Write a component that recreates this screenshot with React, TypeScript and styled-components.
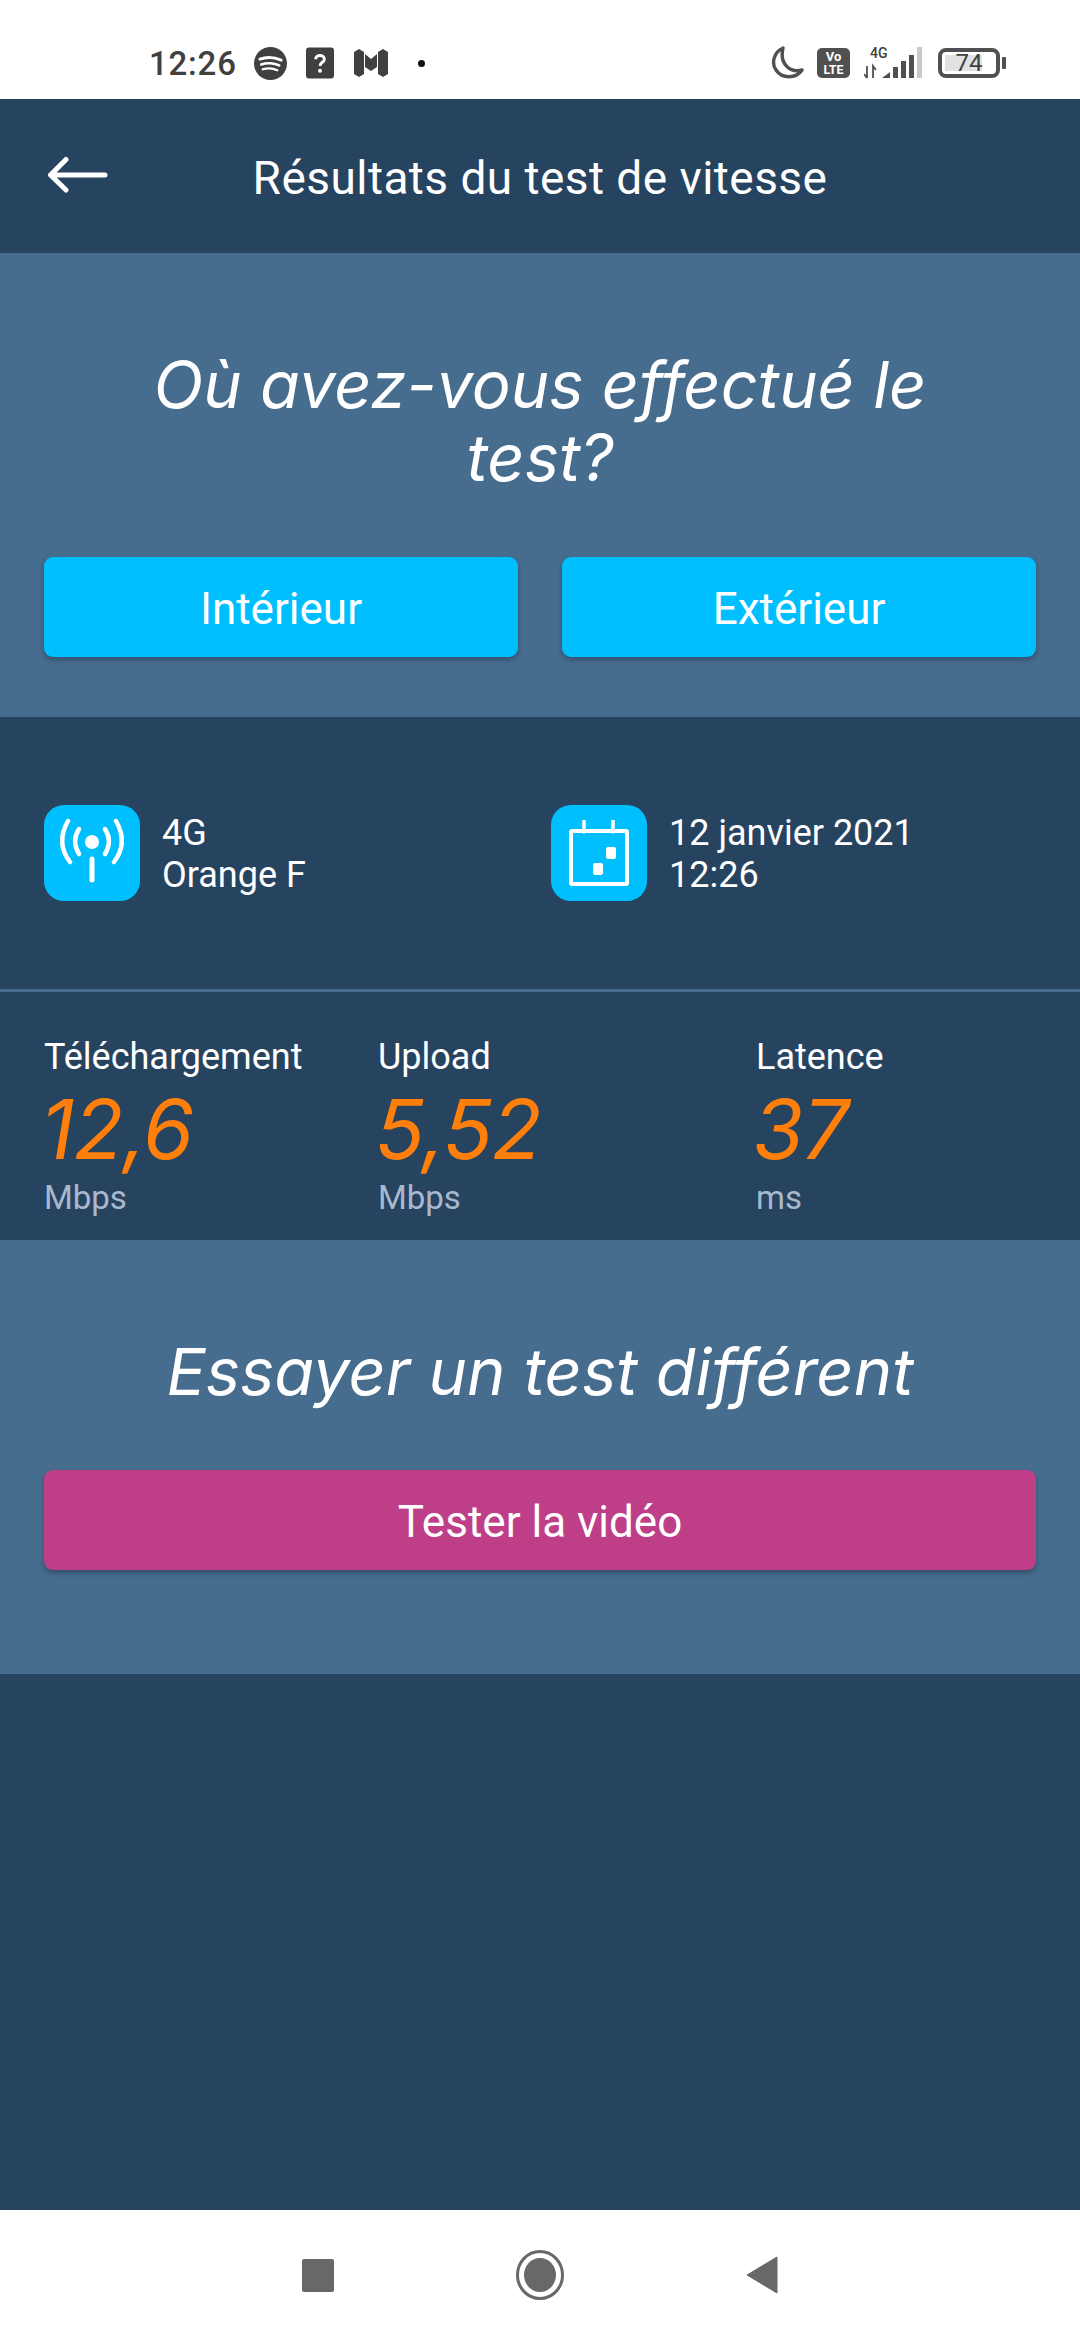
import React from 'react';
import styled, { createGlobalStyle } from 'styled-components';

const GlobalStyle = createGlobalStyle`
  html, body {
    margin: 0;
    padding: 0;
    background: #ffffff;
  }
  * {
    box-sizing: border-box;
  }
`;

const Screen = styled.div`
  width: 1080px;
  height: 2340px;
  display: flex;
  flex-direction: column;
  font-family: 'Roboto', sans-serif;
  color: #ffffff;
  background: #264360;
`;

const StatusBar = styled.div`
  height: 99px;
  flex: none;
  background: #ffffff;
  display: flex;
  align-items: center;
  justify-content: space-between;
  padding: 27px 80px 0 149px;
  color: #404040;
`;

const StatusGroup = styled.div`
  display: flex;
  align-items: center;
`;

const Clock = styled.span`
  font-size: 33px;
  font-weight: 500;
  letter-spacing: 0.8px;
  margin-right: 17px;
`;

const StatusGlyph = styled.svg<{ $gap: number }>`
  margin-right: ${(p) => p.$gap}px;
  flex: none;
`;

const Battery = styled.div`
  position: relative;
  width: 62px;
  height: 30px;
  border: 4px solid #505050;
  border-radius: 8px;
  display: flex;
  align-items: center;
  justify-content: center;
  font-size: 24px;
  color: #404040;
  margin-left: 15px;

  &::before {
    content: '';
    position: absolute;
    left: 3px;
    top: 3px;
    bottom: 3px;
    width: 68%;
    background: #e2e2e2;
  }

  &::after {
    content: '';
    position: absolute;
    right: -10px;
    top: 5px;
    width: 4px;
    height: 12px;
    border-radius: 1px;
    background: #505050;
  }
`;

const BatteryValue = styled.span`
  position: relative;
`;

const Header = styled.div`
  height: 154px;
  flex: none;
  background: #264360;
  display: grid;
  grid-template-columns: 1fr auto 1fr;
  align-items: center;
  padding: 0 48px;
`;

const HeaderTitle = styled.div`
  font-size: 46px;
  letter-spacing: 0.45px;
  padding-top: 3px;
`;

const Panel = styled.section<{ $height: number }>`
  height: ${(p) => p.$height}px;
  flex: none;
  background: #466c8e;
  padding: 95px 44px 0;
  display: flex;
  flex-direction: column;
`;

const Question = styled.h2`
  margin: 0;
  font-family: 'Inter', sans-serif;
  font-style: italic;
  font-weight: 400;
  font-size: 65px;
  line-height: 73px;
  text-align: center;
`;

const ButtonRow = styled.div`
  display: flex;
  gap: 44px;
  margin-top: 63px;
`;

const ActionButton = styled.button<{ $bg: string }>`
  flex: 1;
  height: 100px;
  padding: 3px 0 0;
  border: none;
  border-radius: 9px;
  background: ${(p) => p.$bg};
  color: #ffffff;
  font-family: 'Roboto', sans-serif;
  font-size: 44px;
  box-shadow: 0 3px 5px rgba(0, 0, 0, 0.25);
`;

const VideoButton = styled(ActionButton)`
  flex: none;
  margin-top: 62px;
`;

const InfoRow = styled.div`
  height: 275px;
  flex: none;
  display: grid;
  grid-template-columns: 507px 1fr;
  align-items: center;
  padding: 0 44px;
  border-bottom: 3px solid #466c8e;
`;

const InfoItem = styled.div`
  display: flex;
  align-items: center;
  gap: 22px;
`;

const InfoIcon = styled.div`
  width: 96px;
  height: 96px;
  border-radius: 20px;
  background: #00bfff;
  display: flex;
  align-items: center;
  justify-content: center;
`;

const InfoText = styled.div`
  font-size: 36px;
  line-height: 42px;
  padding-top: 2px;
`;

const Stats = styled.div`
  height: 248px;
  flex: none;
  display: grid;
  grid-template-columns: 334px 378px 1fr;
  padding: 44px 44px 0;
`;

const Stat = styled.div`
  display: flex;
  flex-direction: column;
`;

const StatLabel = styled.div`
  font-size: 36px;
  line-height: 42px;
`;

const StatValue = styled.div`
  font-family: 'Inter', sans-serif;
  font-style: italic;
  font-size: 82px;
  line-height: 84px;
  letter-spacing: -1px;
  margin: 10px 0 0 -3px;
  color: #ff7f0a;
`;

const StatUnit = styled.div`
  font-size: 33px;
  line-height: 40px;
  margin-top: 6px;
  color: #a9b9cd;
`;

const Spacer = styled.div`
  flex: 1;
`;

const NavBar = styled.div`
  height: 130px;
  flex: none;
  background: #ffffff;
  display: flex;
  align-items: center;
  justify-content: center;
`;

const NavSlot = styled.div`
  width: 222px;
  display: flex;
  justify-content: center;
`;

const Spotify = () => (
  <StatusGlyph $gap={19} width="33" height="33" viewBox="0 0 34 34">
    <circle cx="17" cy="17" r="17" fill="#404040" />
    <g fill="none" stroke="#fff" strokeLinecap="round">
      <path d="M6 12.5 C13 10 21 10.5 28 13.5" strokeWidth="3" />
      <path d="M7.5 18 C13 16 21 16.5 26 19" strokeWidth="2.6" />
      <path d="M9 23 C14 21.5 20 22 24 24" strokeWidth="2.2" />
    </g>
  </StatusGlyph>
);

const QuestionBox = () => (
  <StatusGlyph $gap={20} width="28" height="32" viewBox="0 0 29 32">
    <rect width="29" height="32" rx="3" fill="#404040" />
    <path d="M10 12 C10 7 19 7 19 12 C19 15.5 14.5 15 14.5 19" fill="none" stroke="#fff" strokeWidth="3" />
    <circle cx="14.5" cy="24" r="2" fill="#fff" />
  </StatusGlyph>
);

const MapGlyph = () => (
  <StatusGlyph $gap={30} width="34" height="28" viewBox="0 0 34 28">
    <path d="M0 3 L5 0 L10 3 V25 L5 28 L0 25 Z" fill="#404040" />
    <path d="M24 3 L29 0 L34 3 V25 L29 28 L24 25 Z" fill="#404040" />
    <path d="M11 5 L17 10 L23 5 V18 L17 22 L11 18 Z" fill="#404040" />
  </StatusGlyph>
);

const Moon = () => (
  <StatusGlyph $gap={13} width="33" height="34" viewBox="0 0 33 34">
    <path d="M12 2 C3 6 0 17 5 24 C11 33 25 33 31 24 C20 27 8 19 12 2 Z" fill="none" stroke="#505050" strokeWidth="3.4" strokeLinejoin="round" />
  </StatusGlyph>
);

const Volte = () => (
  <StatusGlyph $gap={14} width="33" height="30" viewBox="0 0 33 30">
    <rect width="33" height="30" rx="5" fill="#505050" />
    <text x="16.5" y="13" textAnchor="middle" fontFamily="Roboto" fontWeight="700" fontSize="13" fill="#fff">Vo</text>
    <text x="16.5" y="26" textAnchor="middle" fontFamily="Roboto" fontWeight="700" fontSize="12.5" fill="#fff">LTE</text>
  </StatusGlyph>
);

const Signal = () => (
  <svg width="59" height="38" viewBox="0 -3 59 38">
    <text x="6" y="11" fontFamily="Roboto" fontWeight="500" fontSize="14" fill="#404040">4G</text>
    <path d="M3 19 V31 M0 27 L3 31 M9 31 V19 L12 23" fill="none" stroke="#505050" strokeWidth="1.8" />
    <path d="M18 31 L26 25 V31 Z" fill="#505050" />
    <rect x="29" y="20" width="5" height="11" fill="#505050" />
    <rect x="37" y="14" width="5" height="17" fill="#505050" />
    <rect x="45" y="8" width="5" height="23" fill="#505050" />
    <rect x="53" y="0" width="5" height="31" fill="#c9c9c9" />
  </svg>
);

const BackArrow = () => (
  <svg width="60" height="40" viewBox="0 0 60 40">
    <path d="M3 19 H57 M18 3.5 L2.5 19 L18 34" fill="none" stroke="#fff" strokeWidth="5" strokeLinecap="round" strokeLinejoin="round" />
  </svg>
);

const AntennaIcon = () => (
  <svg width="64" height="76" viewBox="0 0 64 76">
    <circle cx="32" cy="27" r="7" fill="#fff" />
    <path d="M32 44 V65" stroke="#fff" strokeWidth="5" strokeLinecap="round" />
    <g fill="none" stroke="#fff" strokeWidth="4.5" strokeLinecap="round">
      <path d="M19 14 C14 22 14 31 19 39" />
      <path d="M45 14 C50 22 50 31 45 39" />
      <path d="M8 6 C0 20 0 34 10 47" />
      <path d="M56 6 C64 20 64 34 54 47" />
    </g>
  </svg>
);

const CalendarIcon = () => (
  <svg width="60" height="66" viewBox="0 0 60 66">
    <rect x="2" y="11" width="56" height="53" rx="1" fill="none" stroke="#fff" strokeWidth="4" />
    <path d="M15 1 V12 M44 1 V12" stroke="#fff" strokeWidth="3.5" strokeLinecap="round" />
    <rect x="37" y="27" width="10" height="12" rx="2" fill="#fff" />
    <rect x="24" y="43" width="10" height="12" rx="2" fill="#fff" />
  </svg>
);

const App: React.FC = () => {
  const stats = [
    { label: 'Téléchargement', value: '12,6', unit: 'Mbps' },
    { label: 'Upload', value: '5,52', unit: 'Mbps' },
    { label: 'Latence', value: '37', unit: 'ms' },
  ];

  return (
    <Screen>
      <GlobalStyle />
      <StatusBar>
        <StatusGroup>
          <Clock>12:26</Clock>
          <Spotify />
          <QuestionBox />
          <MapGlyph />
          <svg width="7" height="7"><circle cx="3.5" cy="3.5" r="3.5" fill="#111" /></svg>
        </StatusGroup>
        <StatusGroup>
          <Moon />
          <Volte />
          <Signal />
          <Battery><BatteryValue>74</BatteryValue></Battery>
        </StatusGroup>
      </StatusBar>

      <Header>
        <BackArrow />
        <HeaderTitle>Résultats du test de vitesse</HeaderTitle>
      </Header>

      <Panel $height={464}>
        <Question>Où avez-vous effectué le<br />test?</Question>
        <ButtonRow>
          <ActionButton $bg="#00bfff">Intérieur</ActionButton>
          <ActionButton $bg="#00bfff">Extérieur</ActionButton>
        </ButtonRow>
      </Panel>

      <InfoRow>
        <InfoItem>
          <InfoIcon><AntennaIcon /></InfoIcon>
          <InfoText>4G<br />Orange F</InfoText>
        </InfoItem>
        <InfoItem>
          <InfoIcon><CalendarIcon /></InfoIcon>
          <InfoText>12 janvier 2021<br />12:26</InfoText>
        </InfoItem>
      </InfoRow>

      <Stats>
        {stats.map((s) => (
          <Stat key={s.label}>
            <StatLabel>{s.label}</StatLabel>
            <StatValue>{s.value}</StatValue>
            <StatUnit>{s.unit}</StatUnit>
          </Stat>
        ))}
      </Stats>

      <Panel $height={434}>
        <Question>Essayer un test différent</Question>
        <VideoButton $bg="#bf3e88">Tester la vidéo</VideoButton>
      </Panel>

      <Spacer />

      <NavBar>
        <NavSlot>
          <svg width="32" height="33"><rect width="32" height="33" rx="2" fill="#686868" /></svg>
        </NavSlot>
        <NavSlot>
          <svg width="48" height="50" viewBox="0 0 48 50">
            <ellipse cx="24" cy="25" rx="22.5" ry="23.5" fill="none" stroke="#686868" strokeWidth="3" />
            <ellipse cx="24" cy="25" rx="16" ry="17" fill="#686868" />
          </svg>
        </NavSlot>
        <NavSlot>
          <svg width="32" height="38" viewBox="0 0 32 38">
            <path d="M31 1 V37 L1 19 Z" fill="#686868" stroke="#686868" strokeWidth="1" strokeLinejoin="round" />
          </svg>
        </NavSlot>
      </NavBar>
    </Screen>
  );
};

export default App;
